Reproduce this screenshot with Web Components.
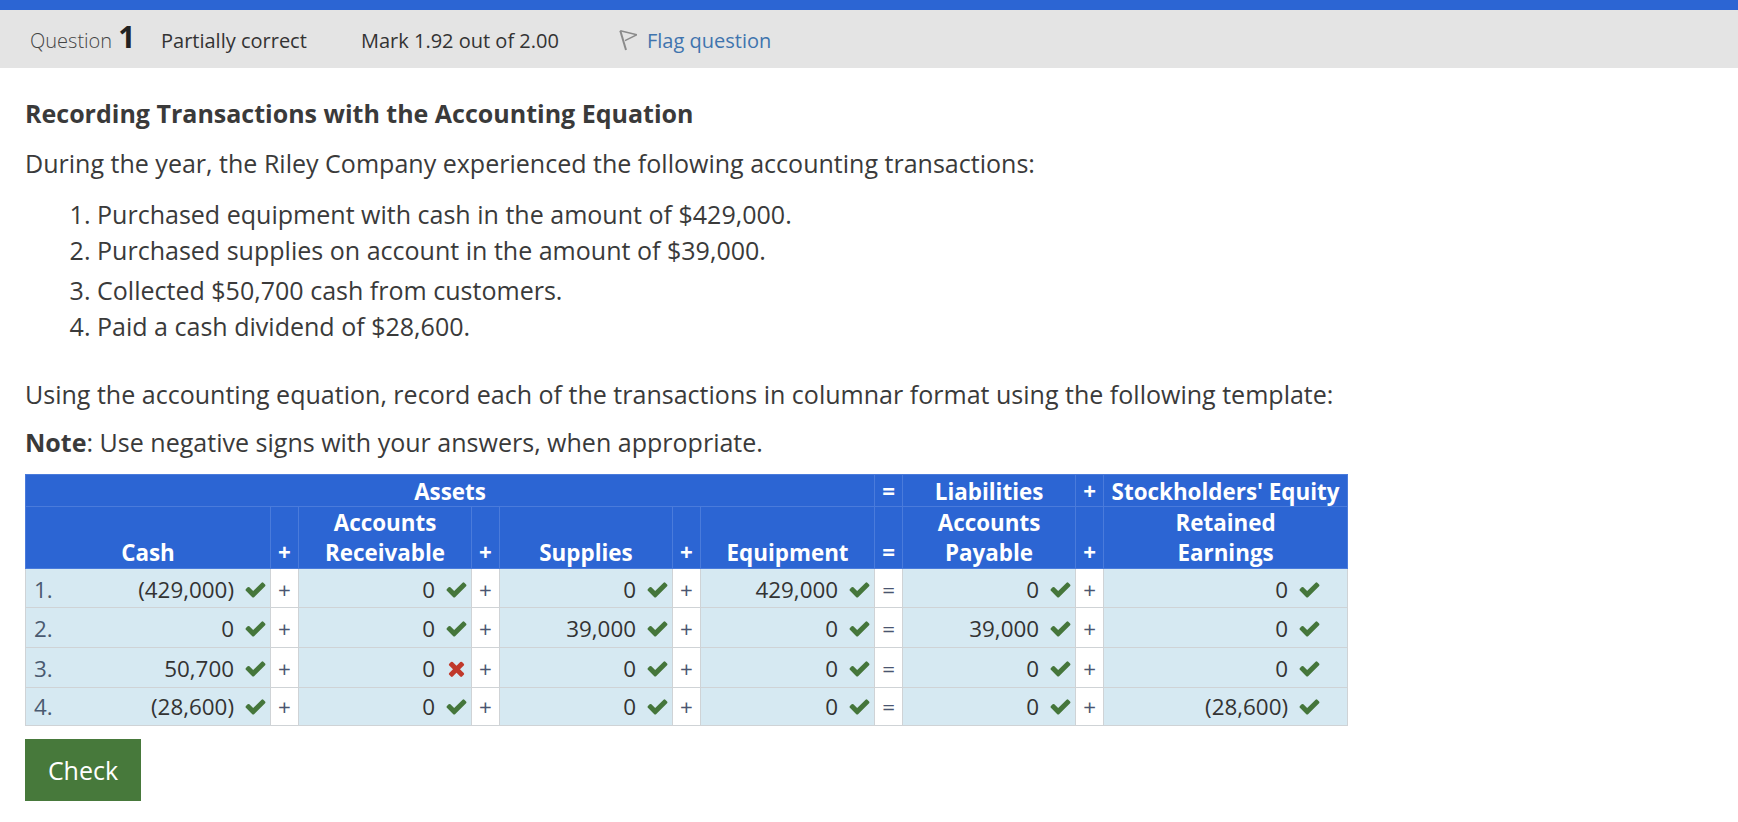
<!DOCTYPE html>
<html>
<head>
<meta charset="utf-8">
<title>Question 1</title>
<style>
  html, body { margin: 0; padding: 0; background: #fff; }
  body { font-family: "Open Sans", sans-serif; color: #333; }
</style>
</head>
<body>
<quiz-page>
  <question-header slot="header" number="1" state="Partially correct" mark="Mark 1.92 out of 2.00"></question-header>
  <h-title>Recording Transactions with the Accounting Equation</h-title>
  <q-text>During the year, the Riley Company experienced the following accounting transactions:</q-text>
  <q-list>
    <li>Purchased equipment with cash in the amount of $429,000.</li>
    <li>Purchased supplies on account in the amount of $39,000.</li>
    <li>Collected $50,700 cash from customers.</li>
    <li>Paid a cash dividend of $28,600.</li>
  </q-list>
  <q-text style="margin-top:33px">Using the accounting equation, record each of the transactions in columnar format using the following template:</q-text>
  <q-text style="margin-top:14px"><b>Note</b>: Use negative signs with your answers, when appropriate.</q-text>
  <equation-table></equation-table>
  <check-button>Check</check-button>
</quiz-page>

<script>
const CHECK = 'M1671 566q0 40-28 68l-724 724-136 136q-28 28-68 28t-68-28l-136-136-362-362q-28-28-28-68t28-68l136-136q28-28 68-28t68 28l294 295 656-657q28-28 68-28t68 28l136 136q28 28 28 68z';
const CROSS = 'M1490 1322q0 40-28 68l-136 136q-28 28-68 28t-68-28l-294-294-294 294q-28 28-68 28t-68-28l-136-136q-28-28-28-68t28-68l294-294-294-294q-28-28-28-68t28-68l136-136q28-28 68-28t68 28l294 294 294-294q28-28 68-28t68 28l136 136q28 28 28 68t-28 68l-294 294 294 294q28 28 28 68z';

class QuizPage extends HTMLElement {
  constructor() {
    super();
    this.attachShadow({ mode: 'open' });
  }
  connectedCallback() {
    this.shadowRoot.innerHTML = `
      <style>
        :host { display: block; }
        .topbar { height: 10px; background: #2c65d3; }
        .content { padding: 28px 25px 0; }
      </style>
      <div class="topbar"></div>
      <slot name="header"></slot>
      <div class="content"><slot></slot></div>
    `;
  }
}

class QuestionHeader extends HTMLElement {
  constructor() {
    super();
    this.attachShadow({ mode: 'open' });
  }
  connectedCallback() {
    this.shadowRoot.innerHTML = `
      <style>
        :host { display: flex; align-items: center; height: 58px; padding: 2px 0 0 30px; box-sizing: border-box; background: #e4e4e4; font-size: 20px; color: #333; }
        .q { font-weight: 300; width: 131px; display: flex; align-items: baseline; gap: 6px; color: #444; margin-bottom: 7px; }
        .q b { font-size: 30px; font-weight: 700; color: #222; }
        .state { width: 200px; }
        .mark { width: 256px; }
        .flag { display: flex; align-items: center; gap: 10px; color: #3f74ae; }
        svg { display: block; }
      </style>
      <div class="q">Question <b>${this.getAttribute('number')}</b></div>
      <div class="state">${this.getAttribute('state')}</div>
      <div class="mark">${this.getAttribute('mark')}</div>
      <div class="flag">
        <svg width="20" height="24" viewBox="0 0 20 24" fill="none" stroke="#8a8a8a" stroke-linejoin="round">
          <path d="M3.3 2.7L9 22" stroke-width="2"/><path d="M3.3 2.7L20 6.7 8 12.7" stroke-width="1.4"/>
        </svg>
        Flag question
      </div>
    `;
  }
}

class HTitle extends HTMLElement {
  constructor() {
    super();
    this.attachShadow({ mode: 'open' });
  }
  connectedCallback() {
    this.shadowRoot.innerHTML = `
      <style>
        :host { display: block; font-size: 25px; font-weight: 700; line-height: 34px; color: #3a3a3a; margin-bottom: 16px; }
      </style>
      <slot></slot>
    `;
  }
}

class QText extends HTMLElement {
  constructor() {
    super();
    this.attachShadow({ mode: 'open' });
  }
  connectedCallback() {
    this.shadowRoot.innerHTML = `
      <style>
        :host { display: block; font-size: 25.04px; line-height: 34px; color: #3a3a3a; }
      </style>
      <slot></slot>
    `;
  }
}

class QList extends HTMLElement {
  constructor() {
    super();
    this.attachShadow({ mode: 'open' });
  }
  connectedCallback() {
    const items = [...this.querySelectorAll('li')].map(li => `<li>${li.textContent}</li>`).join('');
    this.shadowRoot.innerHTML = `
      <style>
        :host { display: block; font-size: 25.04px; color: #3a3a3a; margin-top: 16px; }
        ol { margin: 0; padding: 0 0 0 72px; }
        li { height: 36px; line-height: 36px; }
        li:nth-child(3) { margin-top: 4px; }
      </style>
      <ol>${items}</ol>
    `;
  }
}

class EquationTable extends HTMLElement {
  constructor() {
    super();
    this.attachShadow({ mode: 'open' });
  }
  cell(v, last) {
    const bad = v.endsWith('!');
    const val = bad ? v.slice(0, -1) : v;
    const icon = `<svg class="${bad ? 'x' : 'c'}" viewBox="0 0 1792 1792"><path d="${bad ? CROSS : CHECK}"/></svg>`;
    return `<td class="val${last ? ' last' : ''}"><span>${val}</span>${icon}</td>`;
  }
  connectedCallback() {
    const rows = [
      ['(429,000)', '0', '0', '429,000', '0', '0'],
      ['0', '0', '39,000', '0', '39,000', '0'],
      ['50,700', '0!', '0', '0', '0', '0'],
      ['(28,600)', '0', '0', '0', '0', '(28,600)']
    ];
    const ops = ['+', '+', '+', '=', '+'];
    const body = rows.map((r, i) => {
      let tds = '';
      r.forEach((v, j) => {
        let td = this.cell(v, j === 5);
        if (j === 0) td = td.replace('<span>', `<em>${i + 1}.</em><span>`);
        tds += td;
        if (j < 5) tds += `<td class="op">${ops[j]}</td>`;
      });
      return `<tr class="r${i + 1}">${tds}</tr>`;
    }).join('');

    this.shadowRoot.innerHTML = `
      <style>
        :host { display: block; margin-top: 15px; }
        table { border-collapse: collapse; table-layout: fixed; width: 1322px; font-size: 22.4px; }
        th { background: #2c65d3; color: #fff; font-weight: 700; border: 1px solid #4a7bdb; padding: 0; line-height: 29.5px; vertical-align: bottom; }
        .h1 th { height: 29px; line-height: 28px; padding-top: 2px; vertical-align: middle; }
        .h2 th { height: 60px; padding-bottom: 1px; }
        td { border: 1px solid #cfd3d6; padding: 0; color: #333; line-height: 30px; }
        .r1 td { height: 35px; padding-top: 3px; }
        .r2 td { height: 37px; padding-top: 2px; }
        .r3 td { height: 37px; padding-top: 2px; }
        .r4 td { height: 37px; }
        td.val { background: #d6e9f2; text-align: right; padding-right: 3px; white-space: nowrap; }
        td.last { padding-right: 26px; }
        td.op { background: #fff; text-align: center; color: #4a5570; }
        em { font-style: normal; float: left; padding-left: 8px; color: #4a5a70; }
        svg { display: inline-block; width: 23px; height: 23px; margin-left: 10px; vertical-align: -3px; }
        svg.c { fill: #45763b; }
        svg.x { fill: #c0392b; }
      </style>
      <table>
        <colgroup>
          <col style="width:245px"><col style="width:28px"><col style="width:173px"><col style="width:28px">
          <col style="width:173px"><col style="width:28px"><col style="width:174px"><col style="width:28px">
          <col style="width:173px"><col style="width:28px"><col style="width:244px">
        </colgroup>
        <tr class="h1">
          <th colspan="7">Assets</th><th>=</th><th>Liabilities</th><th>+</th><th style="white-space:nowrap">Stockholders' Equity</th>
        </tr>
        <tr class="h2">
          <th>Cash</th><th>+</th><th>Accounts<br>Receivable</th><th>+</th><th>Supplies</th><th>+</th><th>Equipment</th><th>=</th><th>Accounts<br>Payable</th><th>+</th><th>Retained<br>Earnings</th>
        </tr>
        ${body}
      </table>
    `;
  }
}

class CheckButton extends HTMLElement {
  constructor() {
    super();
    this.attachShadow({ mode: 'open' });
  }
  connectedCallback() {
    this.shadowRoot.innerHTML = `
      <style>
        :host { display: block; margin-top: 13px; }
        button { display: block; width: 116px; height: 62px; background: #47793b; color: #fff; border: 0; padding: 0; font: 25px "Open Sans", sans-serif; }
      </style>
      <button><slot></slot></button>
    `;
  }
}

customElements.define('quiz-page', QuizPage);
customElements.define('question-header', QuestionHeader);
customElements.define('h-title', HTitle);
customElements.define('q-text', QText);
customElements.define('q-list', QList);
customElements.define('equation-table', EquationTable);
customElements.define('check-button', CheckButton);
</script>
</body>
</html>
